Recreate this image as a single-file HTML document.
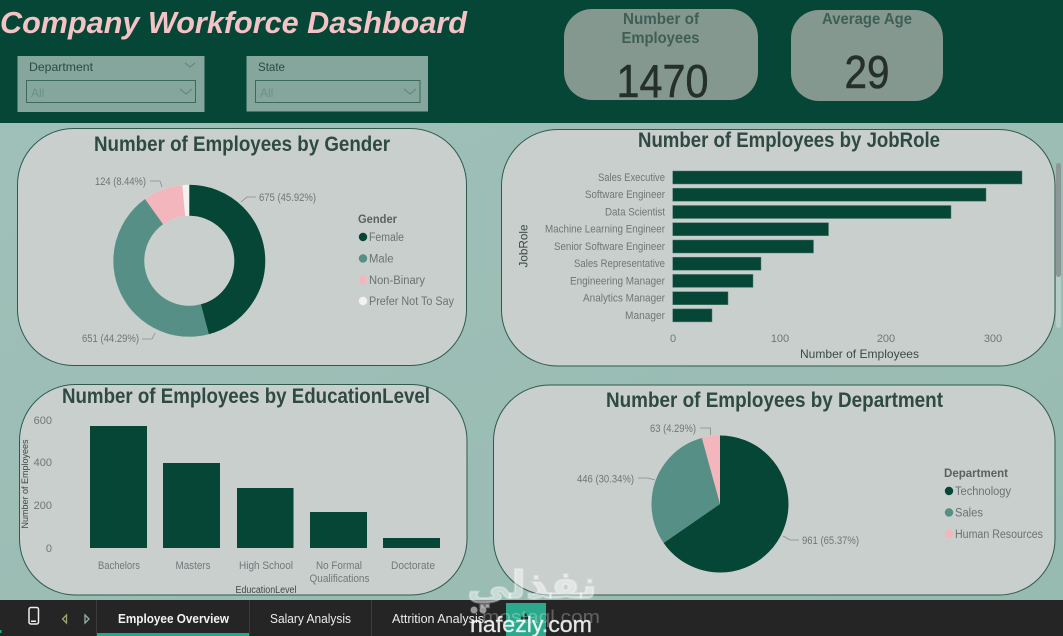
<!DOCTYPE html>
<html><head><meta charset="utf-8"><title>Company Workforce Dashboard</title>
<style>
html,body{margin:0;padding:0;width:1063px;height:636px;overflow:hidden;background:#9bbdb5}
svg{display:block;filter:blur(.35px)}
text{font-family:"Liberation Sans","DejaVu Sans",sans-serif}
.t{font-weight:700;font-size:21px;fill:#2f4a42}
.l{font-size:11px;fill:#6f7674}
.d{font-size:11.5px;fill:#6b7270}
.b{font-size:11.5px;font-weight:700;fill:#5a6260}
.p{fill:#c9cfcd;stroke:#2f5a4e;stroke-width:1}
.ld{fill:none;stroke:#868c8a;stroke-width:.8}
.e{font-size:11px;fill:#71787a}
.n{font-size:46px;fill:#25302d;stroke:#25302d;stroke-width:.5}
.k{font-size:16px;font-weight:700;fill:#3f5f56}
</style></head><body>
<svg width="1063" height="636" viewBox="0 0 1063 636" xmlns="http://www.w3.org/2000/svg">
<defs><linearGradient id="bg" x1="0" x2="1" y1="0" y2="1"><stop offset="0" stop-color="#9fc0b8"/><stop offset="1" stop-color="#97bab1"/></linearGradient></defs>
<rect x="0" y="123" width="1063" height="477" fill="url(#bg)"/>
<rect x="0" y="0" width="1063" height="123" fill="#064636"/>

<text x="0" y="33" font-size="31" font-weight="700" font-style="italic" fill="#f5c3c6" textLength="467" lengthAdjust="spacingAndGlyphs">Company Workforce Dashboard</text>

<rect x="17.500" y="56" width="187" height="56" fill="#84a69c"/>
<text x="29" y="71" font-size="12" fill="#2c4a42" textLength="64" lengthAdjust="spacingAndGlyphs">Department</text>
<path d="M185 63l5 4 5-4" fill="none" stroke="#5e8379"/>
<rect x="26.500" y="80.500" width="169" height="22" fill="none" stroke="#3c6a5c"/>
<text x="31" y="97" font-size="12" fill="#6a9185">All</text>
<path d="M180 89l6 5 6-5" fill="none" stroke="#5e8379"/>

<rect x="246.500" y="56" width="181.500" height="55.500" fill="#84a69c"/>
<text x="258" y="71" font-size="12" fill="#2c4a42" textLength="27" lengthAdjust="spacingAndGlyphs">State</text>
<rect x="255.500" y="80.500" width="164.500" height="22" fill="none" stroke="#3c6a5c"/>
<text x="260" y="97" font-size="12" fill="#6a9185">All</text>
<path d="M404 89l6 5 6-5" fill="none" stroke="#5e8379"/>

<rect x="564" y="9" width="194" height="91" rx="28" fill="#84988f"/>
<text class="k" x="623" y="24" textLength="76" lengthAdjust="spacingAndGlyphs">Number of</text>
<text class="k" x="621.500" y="43" textLength="78" lengthAdjust="spacingAndGlyphs">Employees</text>
<text class="n" x="616.500" y="97" textLength="92" lengthAdjust="spacingAndGlyphs">1470</text>
<rect x="791" y="10" width="152" height="91" rx="28" fill="#84988f"/>
<text class="k" x="822" y="24" textLength="90" lengthAdjust="spacingAndGlyphs">Average Age</text>
<text class="n" x="844.500" y="88" textLength="45" lengthAdjust="spacingAndGlyphs">29</text>

<!-- Gender -->
<rect class="p" x="17.500" y="128.500" width="449" height="237" rx="56"/>
<text class="t" x="94" y="151" textLength="296" lengthAdjust="spacingAndGlyphs">Number of Employees by Gender</text>
<g fill="none" stroke-width="31" transform="rotate(-90 189.300 260.800)">
<circle cx="189.300" cy="260.800" r="60.500" pathLength="100" stroke="#f2f2ef" stroke-dasharray="100 0"/>
<circle cx="189.300" cy="260.800" r="60.500" pathLength="100" stroke="#f4b6bd" stroke-dasharray="8.44 100" stroke-dashoffset="-90.21"/>
<circle cx="189.300" cy="260.800" r="60.500" pathLength="100" stroke="#568f85" stroke-dasharray="44.29 100" stroke-dashoffset="-45.92"/>
<circle cx="189.300" cy="260.800" r="60.500" pathLength="100" stroke="#064636" stroke-dasharray="45.92 100"/>
</g>
<text class="l" x="95" y="185" textLength="51" lengthAdjust="spacingAndGlyphs">124 (8.44%)</text>
<path class="ld" d="M150 181h10l2 6"/>
<text class="l" x="259" y="201" textLength="57" lengthAdjust="spacingAndGlyphs">675 (45.92%)</text>
<path class="ld" d="M241 202l6-5h9"/>
<text class="l" x="82" y="342" textLength="57" lengthAdjust="spacingAndGlyphs">651 (44.29%)</text>
<path class="ld" d="M142 339h10l3-6"/>
<text class="b" x="358" y="223" textLength="39" lengthAdjust="spacingAndGlyphs">Gender</text>
<circle cx="363" cy="237" r="4.200" fill="#064636"/><text class="d" x="369" y="241" textLength="35" lengthAdjust="spacingAndGlyphs">Female</text>
<circle cx="363" cy="258.500" r="4.200" fill="#568f85"/><text class="d" x="369" y="262.500" textLength="24.500" lengthAdjust="spacingAndGlyphs">Male</text>
<circle cx="363" cy="280" r="4.200" fill="#f4b6bd"/><text class="d" x="369" y="284" textLength="56" lengthAdjust="spacingAndGlyphs">Non-Binary</text>
<circle cx="363" cy="301" r="4.200" fill="#f2f2ef"/><text class="d" x="369" y="305" textLength="85" lengthAdjust="spacingAndGlyphs">Prefer Not To Say</text>

<!-- Job role -->
<rect class="p" x="501.500" y="129.500" width="553.500" height="236.500" rx="56"/>
<text class="t" x="638" y="147" textLength="302" lengthAdjust="spacingAndGlyphs">Number of Employees by JobRole</text>
<g fill="#064636" stroke="#4f7f73" stroke-width=".5">
<rect x="672.700" y="171" width="349.300" height="13"/>
<rect x="672.700" y="188.200" width="313.300" height="13"/>
<rect x="672.700" y="205.500" width="278.300" height="13"/>
<rect x="672.700" y="222.700" width="155.800" height="13"/>
<rect x="672.700" y="240" width="140.800" height="13"/>
<rect x="672.700" y="257.200" width="88.300" height="13"/>
<rect x="672.700" y="274.400" width="80.300" height="13"/>
<rect x="672.700" y="291.700" width="55.300" height="13"/>
<rect x="672.700" y="308.900" width="39.300" height="13"/>
</g>
<text class="l" x="598" y="181" textLength="67" lengthAdjust="spacingAndGlyphs">Sales Executive</text>
<text class="l" x="585" y="198.200" textLength="80" lengthAdjust="spacingAndGlyphs">Software Engineer</text>
<text class="l" x="605" y="215.500" textLength="60" lengthAdjust="spacingAndGlyphs">Data Scientist</text>
<text class="l" x="545" y="232.700" textLength="120" lengthAdjust="spacingAndGlyphs">Machine Learning Engineer</text>
<text class="l" x="554" y="250" textLength="111" lengthAdjust="spacingAndGlyphs">Senior Software Engineer</text>
<text class="l" x="574" y="267.200" textLength="91" lengthAdjust="spacingAndGlyphs">Sales Representative</text>
<text class="l" x="570" y="284.400" textLength="95" lengthAdjust="spacingAndGlyphs">Engineering Manager</text>
<text class="l" x="583" y="301.700" textLength="82" lengthAdjust="spacingAndGlyphs">Analytics Manager</text>
<text class="l" x="625" y="318.900" textLength="40" lengthAdjust="spacingAndGlyphs">Manager</text>
<text class="l" x="673" y="342" text-anchor="middle">0</text>
<text class="l" x="780" y="342" text-anchor="middle">100</text>
<text class="l" x="886" y="342" text-anchor="middle">200</text>
<text class="l" x="993" y="342" text-anchor="middle">300</text>
<text x="800" y="358" font-size="12" fill="#3c4a46" textLength="119" lengthAdjust="spacingAndGlyphs">Number of Employees</text>
<text transform="translate(527.500 267.500) rotate(-90)" font-size="12" fill="#3c4a46" textLength="43" lengthAdjust="spacingAndGlyphs">JobRole</text>
<rect x="1056" y="163" width="5" height="165" rx="2.500" fill="#b4ccc6"/>
<rect x="1056" y="163" width="5" height="114" rx="2.500" fill="#8c9896"/>

<!-- Education -->
<rect class="p" x="19.500" y="384.500" width="447.500" height="210.500" rx="56"/>
<text class="t" x="62" y="403" textLength="368" lengthAdjust="spacingAndGlyphs">Number of Employees by EducationLevel</text>
<g fill="#064636">
<rect x="90" y="426" width="57" height="122"/>
<rect x="163" y="463" width="57" height="85"/>
<rect x="237" y="488" width="56.500" height="60"/>
<rect x="310" y="512" width="57" height="36"/>
<rect x="383" y="538" width="57" height="10"/>
</g>
<text class="l" x="52" y="424" text-anchor="end">600</text>
<text class="l" x="52" y="466" text-anchor="end">400</text>
<text class="l" x="52" y="509" text-anchor="end">200</text>
<text class="l" x="52" y="552" text-anchor="end">0</text>
<text transform="translate(28 528.500) rotate(-90)" font-size="9.500" fill="#3c4a46" textLength="89" lengthAdjust="spacingAndGlyphs">Number of Employees</text>
<text class="e" x="98" y="569" textLength="42" lengthAdjust="spacingAndGlyphs">Bachelors</text>
<text class="e" x="175.500" y="569" textLength="35" lengthAdjust="spacingAndGlyphs">Masters</text>
<text class="e" x="239" y="569" textLength="54" lengthAdjust="spacingAndGlyphs">High School</text>
<text class="e" x="316" y="569" textLength="46" lengthAdjust="spacingAndGlyphs">No Formal</text>
<text class="e" x="309.500" y="582" textLength="60" lengthAdjust="spacingAndGlyphs">Qualifications</text>
<text class="e" x="391" y="569" textLength="44" lengthAdjust="spacingAndGlyphs">Doctorate</text>
<text x="235.500" y="593" font-size="10" fill="#3c4a46" textLength="61" lengthAdjust="spacingAndGlyphs">EducationLevel</text>

<!-- Department -->
<rect class="p" x="493.500" y="385" width="561.500" height="210" rx="56"/>
<text class="t" x="606" y="407" textLength="337" lengthAdjust="spacingAndGlyphs">Number of Employees by Department</text>
<g fill="none" stroke-width="68.500" transform="rotate(-90 720 504)">
<circle cx="720" cy="504" r="34.250" pathLength="100" stroke="#f4b6bd" stroke-dasharray="100 0"/>
<circle cx="720" cy="504" r="34.250" pathLength="100" stroke="#568f85" stroke-dasharray="30.34 100" stroke-dashoffset="-65.37"/>
<circle cx="720" cy="504" r="34.250" pathLength="100" stroke="#064636" stroke-dasharray="65.37 100"/>
</g>
<text class="l" x="650" y="432" textLength="46" lengthAdjust="spacingAndGlyphs">63 (4.29%)</text>
<path class="ld" d="M700 428h10.500v7"/>
<text class="l" x="577" y="482.500" textLength="57" lengthAdjust="spacingAndGlyphs">446 (30.34%)</text>
<path class="ld" d="M638 478h10l7 2"/>
<text class="l" x="802" y="544" textLength="57" lengthAdjust="spacingAndGlyphs">961 (65.37%)</text>
<path class="ld" d="M783 536l7 4h9"/>
<text class="b" x="944" y="477" textLength="64" lengthAdjust="spacingAndGlyphs">Department</text>
<circle cx="949" cy="491" r="4.200" fill="#064636"/><text class="d" x="955" y="495" textLength="56" lengthAdjust="spacingAndGlyphs">Technology</text>
<circle cx="949" cy="512.500" r="4.200" fill="#568f85"/><text class="d" x="955" y="516.500" textLength="28" lengthAdjust="spacingAndGlyphs">Sales</text>
<circle cx="949" cy="534" r="4.200" fill="#f4b6bd"/><text class="d" x="955" y="538" textLength="88" lengthAdjust="spacingAndGlyphs">Human Resources</text>

<!-- Tab bar -->
<rect x="0" y="600" width="1063" height="36" fill="#252525"/>
<path d="M96.500 600v36M249.500 600v36M371.500 600v36" stroke="#3c3c3c" stroke-width="1"/>
<rect x="97" y="633" width="152" height="3" fill="#21a88c"/>
<rect x="0" y="630" width="1.500" height="3" fill="#21a88c"/>
<rect x="29" y="607.500" width="9.500" height="16.500" rx="1.800" fill="none" stroke="#eeeeee" stroke-width="1.500"/>
<rect x="31" y="620.500" width="5" height="1.500" fill="#eeeeee"/>
<path d="M66.500 615v8l-4-4z" fill="none" stroke="#9ea66d" stroke-width="1.300"/>
<path d="M85 615v8l4-4z" fill="none" stroke="#8fb3a8" stroke-width="1.300"/>
<text x="118" y="623" font-size="13" font-weight="700" fill="#f2f2f2" textLength="111" lengthAdjust="spacingAndGlyphs">Employee Overview</text>
<text x="270" y="623" font-size="13" fill="#ececec" textLength="81" lengthAdjust="spacingAndGlyphs">Salary Analysis</text>
<text x="392" y="623" font-size="13" fill="#ececec" textLength="92" lengthAdjust="spacingAndGlyphs">Attrition Analysis</text>
<rect x="506" y="603" width="40" height="33" fill="#2aa98c"/>
<path d="M521 618h9M525.500 613v3" stroke="#1d2b27" stroke-width="2.500"/>

<!-- Watermark -->
<text x="467" y="598" font-size="38" font-weight="700" fill="#ffffff" fill-opacity=".45" stroke="#ffffff" stroke-opacity=".3" stroke-width="2" style="font-family:'DejaVu Sans',sans-serif" textLength="130" lengthAdjust="spacingAndGlyphs">نفذلي</text>
<text x="482" y="623" font-size="18" fill="#ffffff" fill-opacity=".28" textLength="118" lengthAdjust="spacingAndGlyphs">mostaql.com</text>
<circle cx="474" cy="610" r="3.500" fill="#c9c9c9" fill-opacity=".7"/>
<circle cx="483" cy="610" r="3.500" fill="#c9c9c9" fill-opacity=".7"/>
<text x="470" y="632" font-size="22" fill="#ffffff" fill-opacity=".88" stroke="#ffffff" stroke-opacity=".5" stroke-width=".5" textLength="122" lengthAdjust="spacingAndGlyphs">nafezly.com</text>
</svg>
</body></html>
